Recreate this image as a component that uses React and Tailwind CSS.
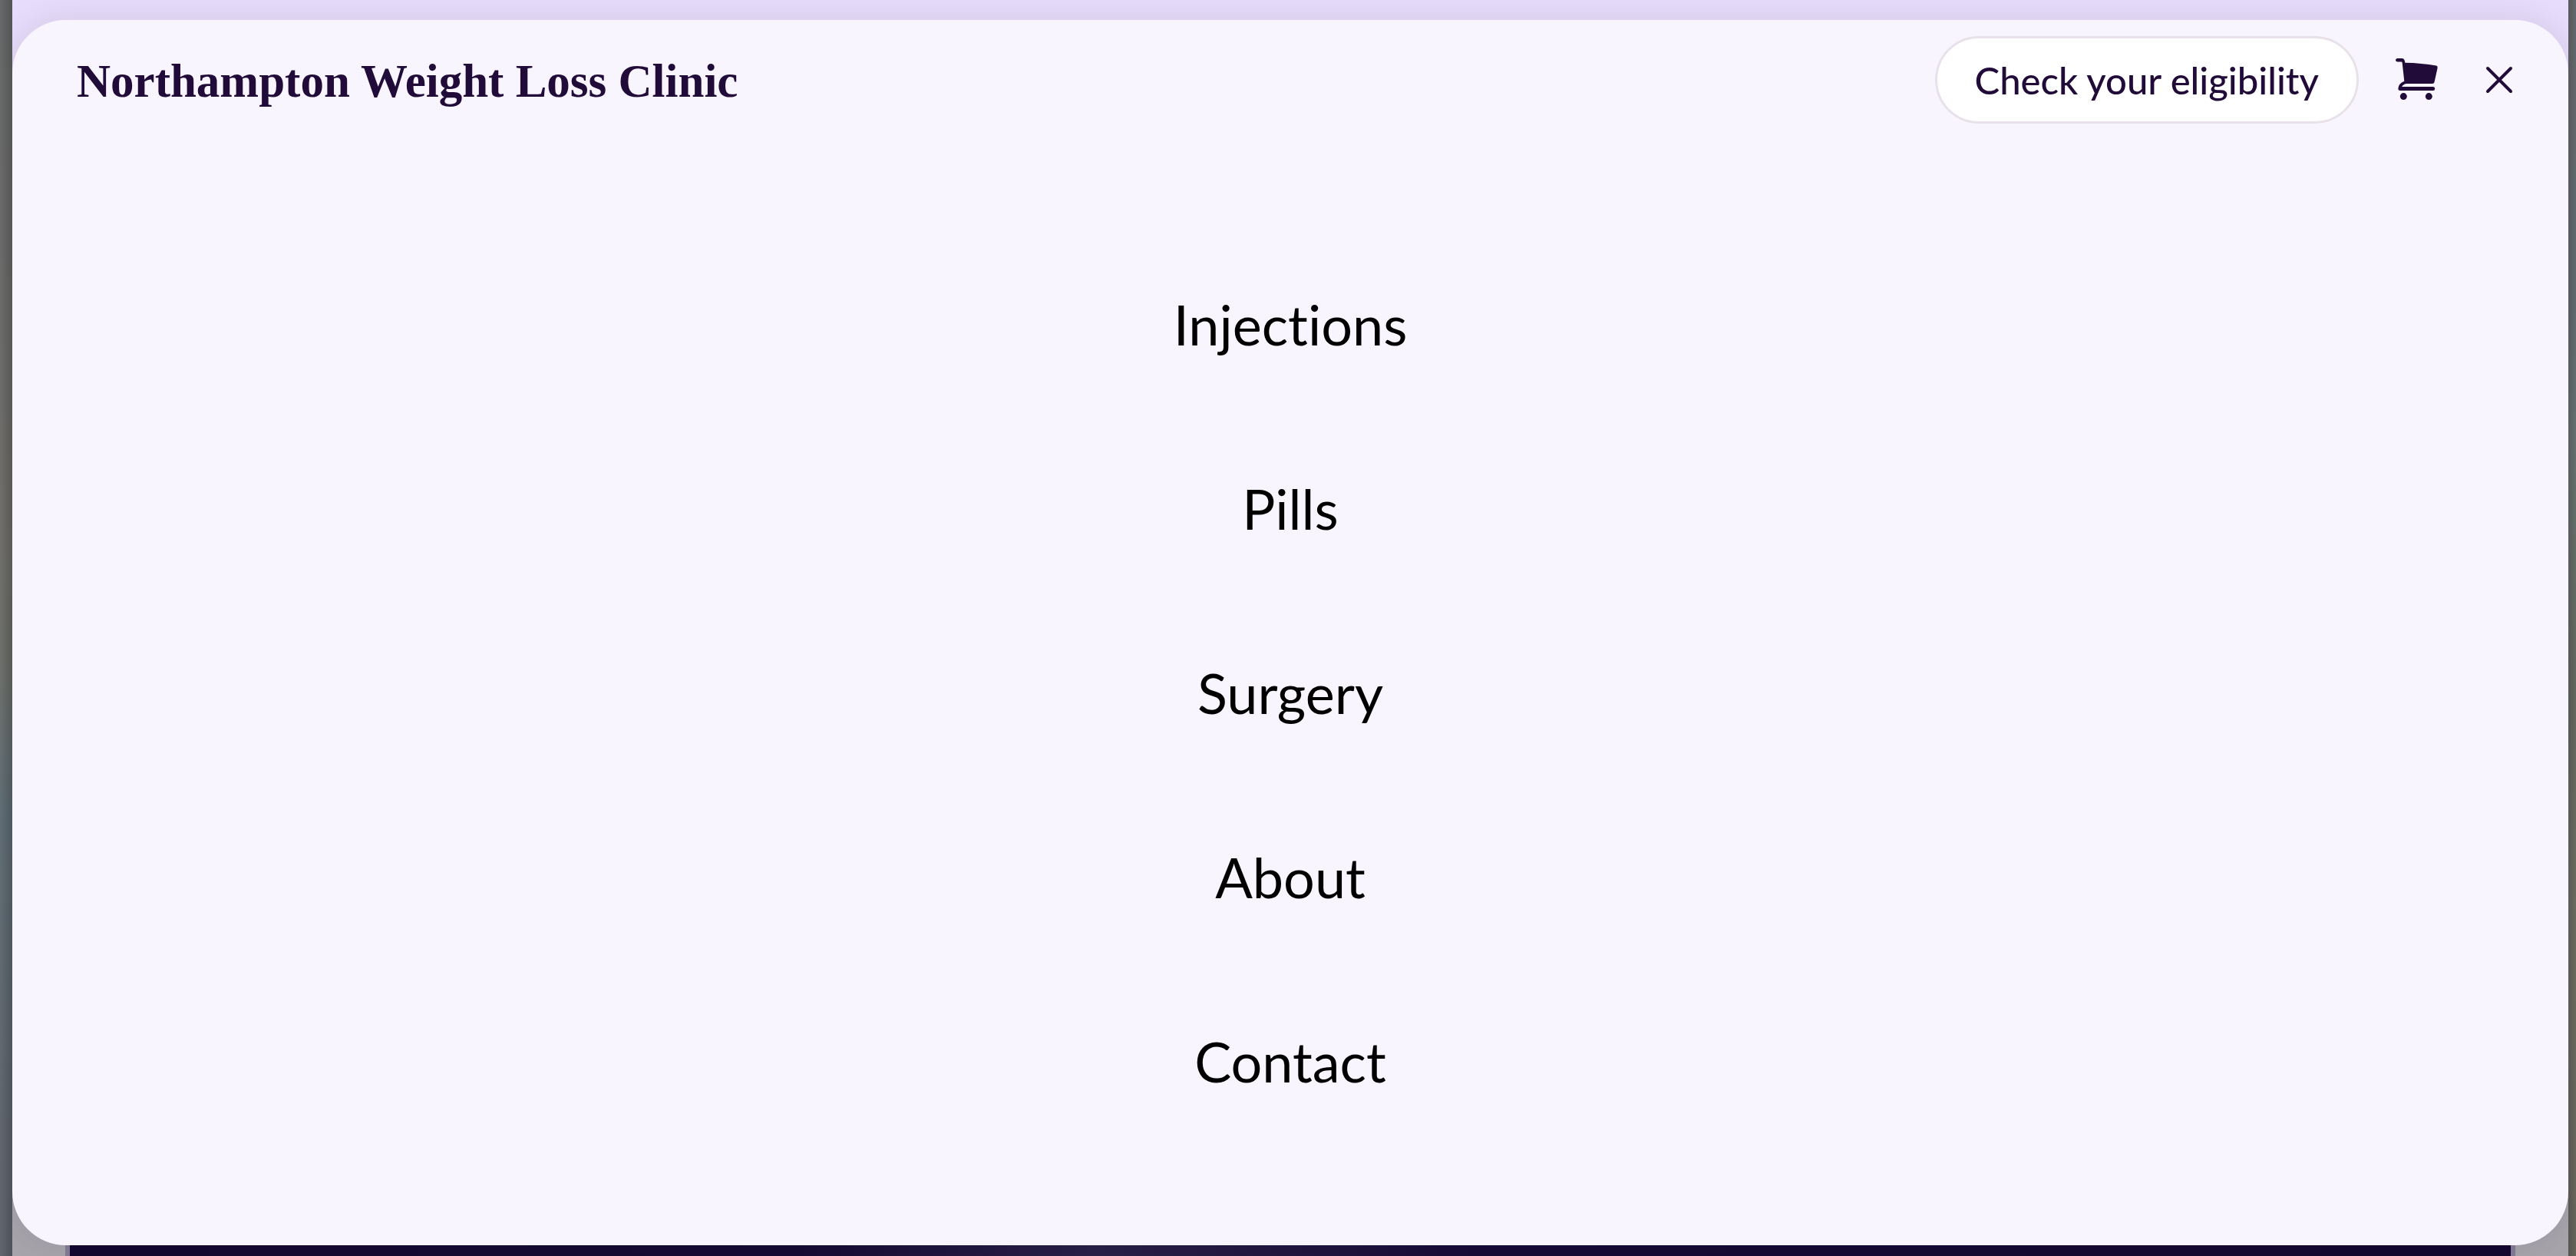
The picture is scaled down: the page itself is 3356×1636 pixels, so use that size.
const links = ["Injections", "Pills", "Surgery", "About", "Contact"];

function CartIcon() {
  return (
    <svg viewBox="0 0 56 56" className="size-14" aria-hidden="true">
      <path
        d="M2.200 0H8.500Q12 0.500 12.300 5.700Q34 6 53 9.600Q55 10.300 54.600 12.500L50.500 31Q50 33 48 33H14Q9.500 33.800 8.200 37H48.800Q51.200 37.300 51.200 39.500Q51.200 42 48.800 42H5.500Q3.300 41.800 3.300 39.500Q3.600 33 11.300 29.800L8.600 5.500Q8.500 4.400 7.500 4.400H2.200Q0 4.200 0 2.200Q0 0.200 2.200 0Z"
        fill="#210b39"
      />
      <circle cx="10.300" cy="49.600" r="4.500" fill="#210b39" />
      <circle cx="43.300" cy="49.600" r="4.500" fill="#210b39" />
    </svg>
  );
}

function CloseIcon() {
  return (
    <svg viewBox="0 0 36 36" className="size-9" aria-hidden="true">
      <path d="M3 3L33 33M33 3L3 33" fill="none" stroke="#210b39" strokeWidth="4" strokeLinecap="round" />
    </svg>
  );
}

export default function App() {
  return (
    <div className="grid min-h-screen grid-cols-[16px_1fr_10px] font-[Lato,sans-serif] [font-variant-ligatures:none]">
      <div className="bg-[linear-gradient(90deg,transparent,rgba(0,0,0,0.2)),linear-gradient(180deg,#68696a,#6c6c6b_25%,#706f6b_43%,#6d706c_54%,#606e76_64%,#616a73_80%,#60656f)]" />

      <div className="flex flex-col overflow-hidden bg-[linear-gradient(180deg,#e8ddfc_50%,#a8a5ad_50%)] pt-[26px]">
        <div className="relative z-10 flex grow flex-col rounded-[70px] bg-[#f8f5ff] shadow-[0_0_50px_rgba(0,0,0,0.1)]">
          <header className="flex items-center justify-between pt-[21px] pr-[72px] pl-[84px]">
            <a href="#home" className="pt-1 font-['Liberation_Serif',serif] text-[61px] leading-[80px] font-bold text-[#210b39]">
              Northampton Weight Loss Clinic
            </a>
            <div className="flex items-center">
              <button
                type="button"
                className="h-[114px] rounded-full border-3 border-[#e9e1e9] bg-white px-[49px] text-[49px] leading-[60px] font-medium text-[#210b39]"
              >
                Check your eligibility
              </button>
              <button type="button" aria-label="Cart" className="ml-12">
                <CartIcon />
              </button>
              <button type="button" aria-label="Close menu" className="ml-[61px]">
                <CloseIcon />
              </button>
            </div>
          </header>

          <nav className="flex grow flex-col items-center pt-[141px]">
            {links.map((link) => (
              <a key={link} href={`#${link.toLowerCase()}`} className="text-[72px] leading-[240px] text-black">
                {link}
              </a>
            ))}
          </nav>
        </div>
        <div className="mx-[69px] h-3.5 border-x-6 border-[#857b97] bg-[linear-gradient(90deg,#140831,#160b35_30%,#2a2149_42%,#170b37_58%,#140831)]" />
      </div>

      <div className="bg-[linear-gradient(270deg,transparent,rgba(0,0,0,0.15)),linear-gradient(180deg,#65686b,#616a6e_25%,#66706f_35%,#626760_55%,#6b6b61_72%,#65635d)]" />
    </div>
  );
}
